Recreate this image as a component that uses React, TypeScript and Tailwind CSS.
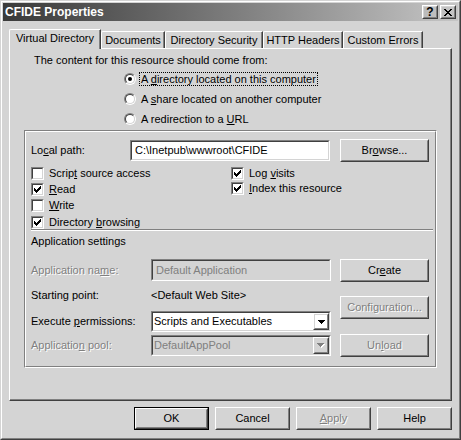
import React from 'react';

type Kids = { children?: React.ReactNode };

const DIS = 'text-[#808080] [text-shadow:1px_1px_0_#fff]';

function U({ children }: Kids) {
  return <span className="underline decoration-1 underline-offset-[1px]">{children}</span>;
}

function Button({
  children,
  className = '',
  disabled = false,
  primary = false,
}: Kids & { className?: string; disabled?: boolean; primary?: boolean }) {
  return (
    <div className={`shrink-0 ${primary ? 'border border-black' : ''} ${className}`}>
      <div className="flex h-full w-full border border-t-white border-l-white border-b-[#404040] border-r-[#404040]">
        <div className="flex flex-1 items-center justify-center border border-t-[#d4d4d4] border-l-[#d4d4d4] border-b-[#808080] border-r-[#808080]">
          <span className={disabled ? DIS : ''}>{children}</span>
        </div>
      </div>
    </div>
  );
}

function Sunken({ className = '', inner = '', children }: Kids & { className?: string; inner?: string }) {
  return (
    <div className={`shrink-0 border border-t-[#808080] border-l-[#808080] border-b-white border-r-white ${className}`}>
      <div className={`flex h-full w-full border border-t-[#404040] border-l-[#404040] border-b-[#d4d4d4] border-r-[#d4d4d4] ${inner}`}>
        {children}
      </div>
    </div>
  );
}

function Arrow({ disabled = false }: { disabled?: boolean }) {
  const d = 'M0 0h7v1H0z M1 1h5v1H1z M2 2h3v1H2z M3 3h1v1H3z';
  if (disabled) {
    return (
      <svg width="8" height="5" viewBox="0 0 8 5" shapeRendering="crispEdges">
        <path d={d} fill="#fff" transform="translate(1 1)" />
        <path d={d} fill="#808080" />
      </svg>
    );
  }
  return (
    <svg width="7" height="4" viewBox="0 0 7 4" shapeRendering="crispEdges">
      <path d={d} fill="#000" />
    </svg>
  );
}

function Combo({ value, disabled = false }: { value: string; disabled?: boolean }) {
  return (
    <Sunken className="h-[21px] w-[180px]" inner={disabled ? 'bg-[#d4d4d4]' : 'bg-white'}>
      <span className={`flex flex-1 items-center pl-[1px] ${disabled ? 'text-[#808080]' : ''}`}>{value}</span>
      <Button className="h-full w-[16px]">
        <Arrow disabled={disabled} />
      </Button>
    </Sunken>
  );
}

function Check({ checked = false, children }: Kids & { checked?: boolean }) {
  return (
    <div className="flex h-[13px] items-center">
      <div className="h-[13px] w-[13px] shrink-0 border border-t-[#808080] border-l-[#808080] border-b-white border-r-white">
        <div className="flex h-full w-full items-center justify-center border border-t-[#404040] border-l-[#404040] border-b-[#d4d4d4] border-r-[#d4d4d4] bg-white">
          {checked && (
            <svg width="7" height="7" viewBox="0 0 7 7" shapeRendering="crispEdges">
              <path
                d="M6 0h1v3h-1z M5 1h1v3h-1z M4 2h1v3h-1z M3 3h1v3h-1z M2 4h1v3h-1z M1 3h1v3h-1z M0 2h1v3h-1z"
                fill="#000"
              />
            </svg>
          )}
        </div>
      </div>
      <span className="ml-[5px]">{children}</span>
    </div>
  );
}

function Radio({ on = false, focused = false, children }: Kids & { on?: boolean; focused?: boolean }) {
  return (
    <div className="flex h-[20px] items-center">
      <div className="h-[12px] w-[12px] shrink-0 rounded-full border border-t-[#808080] border-l-[#808080] border-b-white border-r-white">
        <div className="flex h-full w-full items-center justify-center rounded-full border border-t-[#404040] border-l-[#404040] border-b-[#d4d4d4] border-r-[#d4d4d4] bg-white">
          {on && <div className="h-[4px] w-[4px] rounded-full bg-black" />}
        </div>
      </div>
      <span
        className={`ml-[3px] border border-dotted px-[1px] leading-[12px] ${
          focused ? 'border-black' : 'border-transparent'
        }`}
      >
        {children}
      </span>
    </div>
  );
}

function Tab({ label, width, selected = false }: { label: string; width: string; selected?: boolean }) {
  if (selected) {
    return (
      <div
        className={`relative z-10 -mb-px flex h-[20px] justify-center rounded-tl-[2px] border-t border-l border-r border-t-white border-l-white border-r-[#404040] bg-[#d4d4d4] pt-[2px] shadow-[inset_-1px_0_0_#808080] ${width}`}
      >
        {label}
      </div>
    );
  }
  return (
    <div
      className={`flex h-[17px] justify-center rounded-tl-[2px] border-t border-l border-r border-t-white border-l-white border-r-[#404040] pt-[2px] shadow-[inset_-1px_0_0_#808080] ${width}`}
    >
      {label}
    </div>
  );
}

export default function App() {
  return (
    <div className="h-[440px] w-[461px] bg-[#d4d4d4] font-['Liberation_Sans',Arial,sans-serif] text-[11px] leading-[13px] text-black">
      <div className="flex h-full w-full flex-col border border-t-[#d4d4d4] border-l-[#d4d4d4] border-b-[#404040] border-r-[#404040]">
        <div className="flex flex-1 flex-col border border-t-white border-l-white border-b-[#808080] border-r-[#808080] p-[1px]">
          {/* Title bar */}
          <div className="flex h-[18px] items-center bg-linear-to-r from-[#3a3a3a] to-[#c6c6c6] px-[2px]">
            <span className="flex-1 text-[12px] font-bold text-white">CFIDE Properties</span>
            <Button className="h-[14px] w-[16px]">
              <span className="text-[12px] leading-none font-bold">?</span>
            </Button>
            <Button className="ml-[2px] h-[14px] w-[16px]">
              <svg width="8" height="7" viewBox="0 0 8 7" shapeRendering="crispEdges">
                <path
                  d="M0 0h2v1H0z M6 0h2v1H6z M1 1h2v1H1z M5 1h2v1H5z M2 2h4v1H2z M3 3h2v1H3z M2 4h4v1H2z M1 5h2v1H1z M5 5h2v1H5z M0 6h2v1H0z M6 6h2v1H6z"
                  fill="#000"
                />
              </svg>
            </Button>
          </div>

          <div className="flex flex-col px-[6px]">
            {/* Tabs */}
            <div className="mt-[8px] flex h-[19px] items-end">
              <Tab label="Virtual Directory" width="w-[92px]" selected />
              <Tab label="Documents" width="w-[64px]" />
              <Tab label="Directory Security" width="w-[98px]" />
              <Tab label="HTTP Headers" width="w-[80px]" />
              <Tab label="Custom Errors" width="w-[80px]" />
            </div>

            {/* Tab panel */}
            <div className="flex h-[353px] flex-col border border-t-white border-l-white border-b-[#404040] border-r-[#404040] shadow-[inset_-1px_-1px_0_#808080]">
              <p className="mt-[5px] ml-[24px]">The content for this resource should come from:</p>
              <div className="mt-[2px] ml-[114px] flex flex-col">
                <Radio on focused>
                  A <U>d</U>irectory located on this computer
                </Radio>
                <Radio>
                  A <U>s</U>hare located on another computer
                </Radio>
                <Radio>
                  A redirection to a <U>U</U>RL
                </Radio>
              </div>

              {/* Group box */}
              <div className="mt-[1px] ml-[14px] h-[238px] w-[413px] border border-t-[#808080] border-l-[#808080] border-b-white border-r-white">
                <div className="flex h-full w-full flex-col border border-t-white border-l-white border-b-[#808080] border-r-[#808080] pl-[5px]">
                  <div className="mt-[7px] flex h-[23px] items-center">
                    <span className="w-[99px]">
                      Lo<U>c</U>al path:
                    </span>
                    <Sunken className="h-[21px] w-[200px]" inner="items-center bg-white pl-[3px]">
                      C:\Inetpub\wwwroot\CFIDE
                    </Sunken>
                    <Button className="ml-[10px] h-[23px] w-[89px]">
                      Br<U>o</U>wse...
                    </Button>
                  </div>

                  <div className="mt-[5px] flex">
                    <div className="flex w-[200px] flex-col">
                      <Check>
                        Scrip<U>t</U> source access
                      </Check>
                      <div className="mt-[3px]">
                        <Check checked>
                          <U>R</U>ead
                        </Check>
                      </div>
                      <div className="mt-[3px]">
                        <Check>
                          <U>W</U>rite
                        </Check>
                      </div>
                      <div className="mt-[4px]">
                        <Check checked>
                          Directory <U>b</U>rowsing
                        </Check>
                      </div>
                    </div>
                    <div className="flex flex-col gap-[2px]">
                      <Check checked>
                        Log <U>v</U>isits
                      </Check>
                      <Check checked>
                        <U>I</U>ndex this resource
                      </Check>
                    </div>
                  </div>

                  <div className="h-[2px] w-[402px] border-t border-b border-t-[#808080] border-b-white" />

                  <p className="mt-[4px]">Application settings</p>

                  <div className="mt-[11px] flex">
                    <div className="flex w-[300px] flex-col">
                      <div className="flex h-[22px] items-center">
                        <span className={`w-[120px] ${DIS}`}>
                          Application na<U>m</U>e:
                        </span>
                        <Sunken
                          className="h-[22px] w-[180px]"
                          inner="items-center bg-[#d4d4d4] pl-[3px] text-[#808080]"
                        >
                          Default Application
                        </Sunken>
                      </div>
                      <div className="mt-[8px] flex h-[13px] items-center">
                        <span className="w-[120px]">Starting point:</span>
                        <span>&lt;Default Web Site&gt;</span>
                      </div>
                      <div className="mt-[9px] flex h-[21px] items-center">
                        <span className="w-[120px]">
                          Execute <U>p</U>ermissions:
                        </span>
                        <Combo value="Scripts and Executables" />
                      </div>
                      <div className="mt-[3px] flex h-[21px] items-center">
                        <span className={`w-[120px] ${DIS}`}>
                          Applicatio<U>n</U> pool:
                        </span>
                        <Combo value="DefaultAppPool" disabled />
                      </div>
                    </div>
                    <div className="ml-[9px] flex w-[89px] flex-col">
                      <Button className="h-[23px] w-[89px]">
                        Cr<U>e</U>ate
                      </Button>
                      <Button className="mt-[14px] h-[23px] w-[89px]" disabled>
                        Confi<U>g</U>uration...
                      </Button>
                      <Button className="mt-[15px] h-[23px] w-[89px]" disabled>
                        Un<U>l</U>oad
                      </Button>
                    </div>
                  </div>
                </div>
              </div>
            </div>

            {/* Dialog buttons */}
            <div className="mt-[6px] flex justify-end gap-[6px]">
              <Button className="h-[23px] w-[75px]" primary>
                OK
              </Button>
              <Button className="h-[23px] w-[75px]">Cancel</Button>
              <Button className="h-[23px] w-[75px]" disabled>
                <U>A</U>pply
              </Button>
              <Button className="h-[23px] w-[75px]">Help</Button>
            </div>
          </div>
        </div>
      </div>
    </div>
  );
}
